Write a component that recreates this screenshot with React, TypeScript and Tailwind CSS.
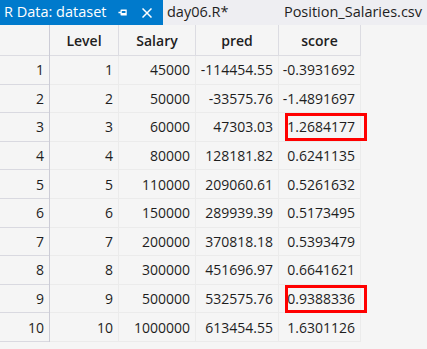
import React from 'react';

const ROWS = [
  { n: 1, level: 1, salary: 45000, pred: '-114454.55', score: '-0.3931692' },
  { n: 2, level: 2, salary: 50000, pred: '-33575.76', score: '-1.4891697' },
  { n: 3, level: 3, salary: 60000, pred: '47303.03', score: '1.2684177', mark: true },
  { n: 4, level: 4, salary: 80000, pred: '128181.82', score: '0.6241135' },
  { n: 5, level: 5, salary: 110000, pred: '209060.61', score: '0.5261632' },
  { n: 6, level: 6, salary: 150000, pred: '289939.39', score: '0.5173495' },
  { n: 7, level: 7, salary: 200000, pred: '370818.18', score: '0.5393479' },
  { n: 8, level: 8, salary: 300000, pred: '451696.97', score: '0.6641621' },
  { n: 9, level: 9, salary: 500000, pred: '532575.76', score: '0.9388336', mark: true },
  { n: 10, level: 10, salary: 1000000, pred: '613454.55', score: '1.6301126' },
];

const cell = 'h-[28.6px] flex items-center justify-end pr-[5px] border-r border-b border-[#ebebeb]';

const App: React.FC = () => {
  return (
    <div className="w-[427px] h-[349px] overflow-hidden bg-[#f5f5f5] text-[#1e1e1e] font-['Open_Sans',sans-serif]">
      {/* tab strip */}
      <div className="h-[25px] bg-[#eeeef2] flex items-center text-[14.5px] leading-none">
        <div className="h-full w-[163px] bg-[#007acc] text-white flex items-center pl-[4px]">
          <span>R Data: dataset</span>
          <svg className="ml-[12px] w-[9px] h-[9px]" viewBox="0 0 10 10" fill="none" stroke="currentColor" strokeWidth={1.4}>
            <path d="M0.5 5H3.5M3.5 2V8M3.5 2.5H9V7.5H3.5M3.5 6.3H9" />
          </svg>
          <svg className="ml-[15px] w-[10px] h-[10px]" viewBox="0 0 10 10" stroke="currentColor" strokeWidth={1.5}>
            <path d="M0.5 0.5L9.5 9.5M9.5 0.5L0.5 9.5" />
          </svg>
        </div>
        <span className="ml-[4px]">day06.R*</span>
        <span className="ml-auto mr-[5px]">Position_Salaries.csv</span>
      </div>

      {/* grid */}
      <div className="flex text-[14px]">
        <div className="w-[50px] border-r border-[#ccccd6]">
          <div className="h-[31px] border-b border-[#dcdce2]" />
          {ROWS.map((r) => (
            <div key={r.n} className="h-[28.6px] flex items-center justify-end pr-[5px] font-medium border-b border-[#d9d9e0]">
              {r.n}
            </div>
          ))}
        </div>
        <div className="grid grid-cols-[69px_77px_83px_82px]">
          {['Level', 'Salary', 'pred', 'score'].map((h) => (
            <div key={h} className="h-[31px] flex items-center justify-center font-semibold border-r border-b border-[#dcdce2]">
              {h}
            </div>
          ))}
          {ROWS.map((r) => (
            <React.Fragment key={r.n}>
              <div className={cell}>{r.level}</div>
              <div className={cell}>{r.salary}</div>
              <div className={cell}>{r.pred}</div>
              <div className={`${cell} relative`}>
                {r.score}
                {r.mark && (
                  <div className="absolute left-[6px] top-0 w-[82px] h-[28px] border-[3px] border-[#ff0000]" />
                )}
              </div>
            </React.Fragment>
          ))}
        </div>
      </div>
    </div>
  );
};

export default App;
